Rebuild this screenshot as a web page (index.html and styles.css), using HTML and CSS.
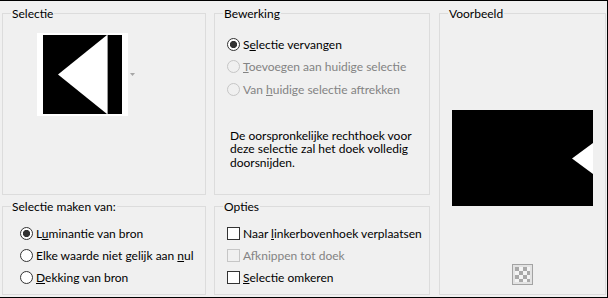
FILE: index.html
```html
<!DOCTYPE html>
<html lang="nl">
<head>
    <meta charset="UTF-8">
    <title>Selectie uit masker</title>
    <link rel="stylesheet" href="styles.css">
</head>
<body>
    <div class="dialog">
        <!-- Selectie -->
        <fieldset class="group group-selectie">
            <legend>Selectie</legend>
            <div class="shape-picker">
                <div class="shape-swatch">
                    <svg width="79" height="79" viewBox="0 0 79 79">
                        <rect width="79" height="79" fill="#000"/>
                        <polygon points="64,0 64,79 15,39.5" fill="#fff"/>
                        <line x1="64.5" y1="0" x2="64.5" y2="79" stroke="#9a9a9a" stroke-width="1"/>
                    </svg>
                </div>
                <svg class="drop-arrow" width="5" height="3" viewBox="0 0 5 3">
                    <polygon points="0,0 5,0 2.5,3" fill="#a6a6a6"/>
                </svg>
            </div>
        </fieldset>

        <!-- Bewerking -->
        <fieldset class="group group-bewerking">
            <legend>Bewerking</legend>
            <div class="options options-bewerking">
                <label class="option"><span class="radio checked"></span><span>S<u>e</u>lectie vervangen</span></label>
                <label class="option disabled"><span class="radio"></span><span><u>T</u>oevoegen aan huidige selectie</span></label>
                <label class="option disabled"><span class="radio"></span><span>Van <u>h</u>uidige selectie aftrekken</span></label>
            </div>
            <p class="note">De oorspronkelijke rechthoek voor<br>deze selectie zal het doek volledig<br>doorsnijden.</p>
        </fieldset>

        <!-- Voorbeeld -->
        <fieldset class="group group-voorbeeld">
            <legend>Voorbeeld</legend>
            <div class="preview">
                <svg width="141" height="96" viewBox="0 0 141 96">
                    <rect width="141" height="96" fill="#000"/>
                    <polygon points="141,33 141,64 120,48.5" fill="#fff"/>
                </svg>
            </div>
            <div class="checker">
                <svg width="21" height="21" viewBox="0 0 21 21">
                    <defs>
                        <pattern id="cells" width="8" height="8" patternUnits="userSpaceOnUse" x="3" y="3">
                            <rect width="8" height="8" fill="#f4f4f4"/>
                            <rect width="4" height="4" fill="#a9a9a9"/>
                            <rect x="4" y="4" width="4" height="4" fill="#a9a9a9"/>
                        </pattern>
                    </defs>
                    <rect x="0.5" y="0.5" width="20" height="20" fill="#e3e3e3" stroke="#a3a3a3"/>
                    <rect x="3" y="3" width="15" height="15" fill="url(#cells)"/>
                </svg>
            </div>
        </fieldset>

        <!-- Selectie maken van -->
        <fieldset class="group group-bron">
            <legend>Selectie maken van:</legend>
            <div class="options options-bron">
                <label class="option"><span class="radio checked"></span><span>L<u>u</u>minantie van bron</span></label>
                <label class="option"><span class="radio"></span><span>Elke waarde niet gelijk aan <u>n</u>ul</span></label>
                <label class="option"><span class="radio"></span><span><u>D</u>ekking van bron</span></label>
            </div>
        </fieldset>

        <!-- Opties -->
        <fieldset class="group group-opties">
            <legend>Opties</legend>
            <div class="options options-opties">
                <label class="option"><span class="check"></span><span>Naar <u>l</u>inkerbovenhoek verplaatsen</span></label>
                <label class="option disabled"><span class="check"></span><span>Af<u>k</u>nippen tot doek</span></label>
                <label class="option"><span class="check"></span><span><u>S</u>electie omkeren</span></label>
            </div>
        </fieldset>
    </div>
</body>
</html>
```

FILE: styles.css
```css
* {
    margin: 0;
    padding: 0;
    box-sizing: border-box;
}

body {
    width: 608px;
    height: 298px;
    background: #f0f0f0;
    border-top: 1px solid #000;
    border-right: 1px solid #000;
    border-bottom: 1px solid #000;
    font-family: 'Segoe UI', Lato, 'Noto Sans', sans-serif;
    font-size: 12px;
    color: #000;
    overflow: hidden;
}

.dialog {
    display: grid;
    grid-template-columns: 204px 216px 168px;
    grid-template-rows: 189px 96px;
    column-gap: 8px;
    row-gap: 4px;
    padding: 5px 0 0 2px;
}

.group {
    min-width: 0;
    height: 100%;
    border: 1px solid #dcdcdc;
}

.group legend {
    margin-left: 8px;
    padding: 0 1px;
    line-height: 15px;
}

.group-voorbeeld {
    grid-column: 3;
    grid-row: 1 / 3;
    margin-left: 1px;
}

/* Selectie */
.shape-picker {
    display: flex;
    align-items: center;
    gap: 2px;
    padding: 12px 0 0 34px;
}

.shape-swatch {
    background: #fff;
    padding: 2px 6px;
    line-height: 0;
}

.shape-swatch svg,
.drop-arrow {
    display: block;
}

/* radio's en vinkjes */
.options {
    display: flex;
    flex-direction: column;
}

.option {
    display: flex;
    align-items: center;
    gap: 3px;
    height: 22px;
    white-space: nowrap;
}

.option.disabled {
    color: #838383;
}

.options-bewerking {
    padding: 12px 0 0 12px;
}

.options-bewerking .option {
    height: 22.5px;
}

.options-bron {
    padding: 8px 0 0 17px;
}

.options-opties {
    padding: 8px 0 0 12px;
}

.radio,
.check {
    flex: none;
    width: 13px;
    height: 13px;
    border: 1px solid #333;
    background: #fff;
}

.radio {
    border-radius: 50%;
}

.radio.checked {
    background: radial-gradient(circle, #333 0 3.3px, #fff 3.9px);
}

.disabled .radio,
.disabled .check {
    border-color: #c6c6c6;
    background: #f0f0f0;
}

.note {
    margin-top: 28px;
    padding-left: 15px;
    line-height: 13.5px;
}

/* Voorbeeld */
.preview {
    display: flex;
    justify-content: center;
    margin-top: 89px;
    line-height: 0;
}

.checker {
    display: flex;
    justify-content: center;
    margin-top: 58px;
    line-height: 0;
}
```
